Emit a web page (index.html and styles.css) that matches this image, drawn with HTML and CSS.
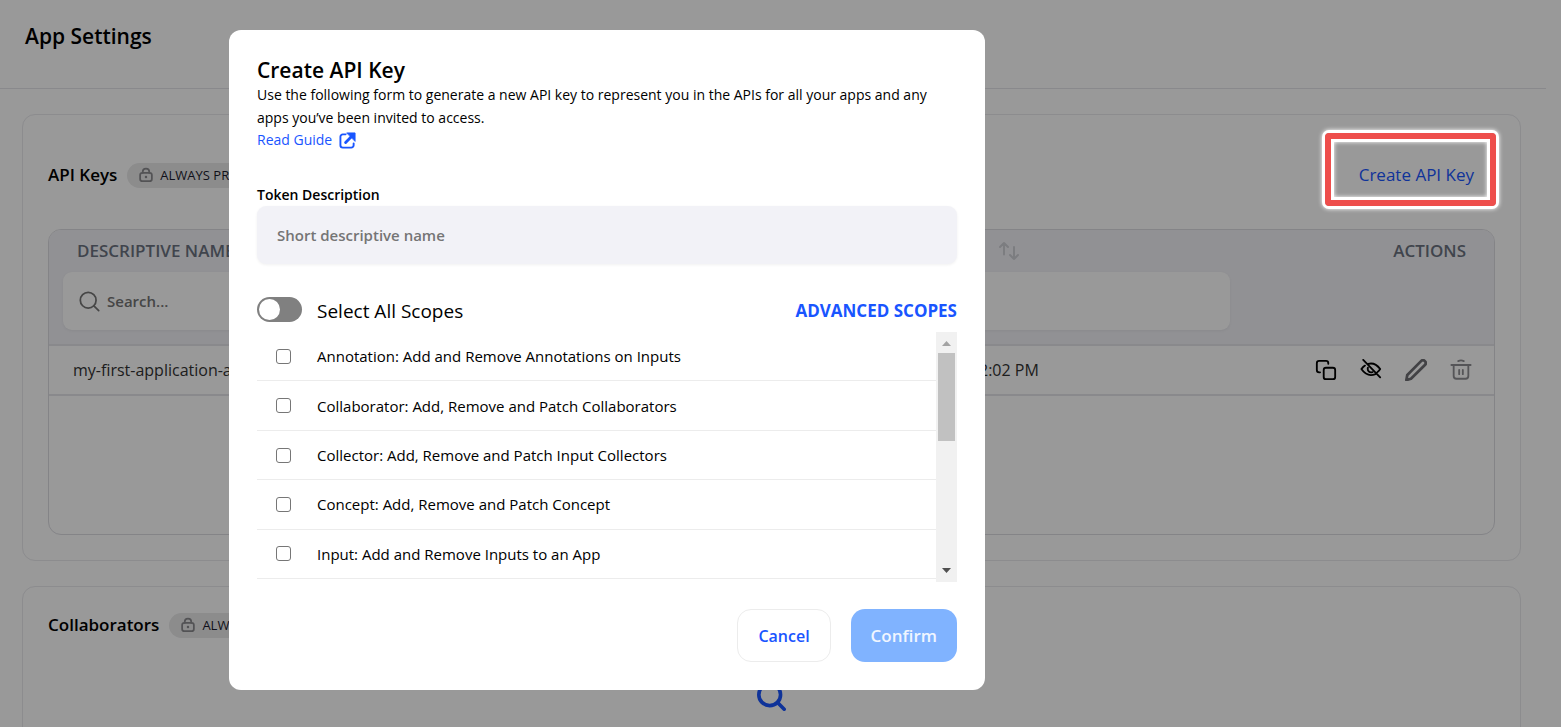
FILE: index.html
```html
<!DOCTYPE html>
<html lang="en">
<head>
<meta charset="utf-8">
<meta name="viewport" content="width=device-width, initial-scale=1">
<title>App Settings</title>
<link rel="stylesheet" href="styles.css">
</head>
<body>
<svg class="defs" aria-hidden="true">
  <symbol id="lock" viewBox="0 0 16 16"><rect x="1.3" y="5.5" width="13.4" height="9.6" rx="2.6"/><path d="M4.3 5.5V4.4a3.7 3.7 0 0 1 7.4 0v1.1"/><circle class="dot" cx="8" cy="10.3" r="1.4"/></symbol>
  <symbol id="search" viewBox="0 0 24 24"><circle cx="10.5" cy="10.5" r="9"/><path d="M17 17l5.5 5.5"/></symbol>
</svg>

<div class="page">
  <header class="page-header"><h1>App Settings</h1></header>
  <main class="sections">
    <section class="card">
      <div class="card-head with-action">
        <h2>API Keys</h2>
        <span class="pill"><svg class="pill-icon"><use href="#lock"/></svg>ALWAYS PRIVATE</span>
        <div class="callout-anchor">
          <button type="button" class="create">Create API Key</button>
          <span class="callout"></span>
        </div>
      </div>
      <div class="table-frame">
        <table class="keys">
          <colgroup><col class="col-name"><col class="col-date"><col class="col-actions"></colgroup>
          <thead>
            <tr class="labels">
              <th scope="col">DESCRIPTIVE NAME</th>
              <th scope="col" aria-label="Created">
                <svg class="sort" viewBox="0 0 20 20"><path d="M5 13.5V2M1 6l4-4 4 4M15 6v12M11 14l4 4 4-4"/></svg>
              </th>
              <th scope="col" class="right">ACTIONS</th>
            </tr>
            <tr class="filters">
              <td><label class="search"><svg class="search-icon"><use href="#search"/></svg><input type="text" placeholder="Search..." aria-label="Search names"></label></td>
              <td><label class="search"><input type="text" aria-label="Search dates"></label></td>
              <td></td>
            </tr>
          </thead>
          <tbody>
            <tr>
              <td>my-first-application-all</td>
              <td>2:02 PM</td>
              <td class="action-cell">
                <div class="actions">
                  <button type="button" aria-label="Copy"><svg viewBox="0 0 24 24"><rect x="9.5" y="9.5" width="12.500" height="12.500" rx="2.5"/><path d="M5.500 14.500H4.500A2.500 2.500 0 0 1 2 12V4.500A2.500 2.500 0 0 1 4.500 2H12a2.500 2.500 0 0 1 2.500 2.500v.8"/></svg></button>
                  <button type="button" aria-label="Show"><svg viewBox="0 0 24 24"><path d="M3.500 1l18.500 19M9 5.300c4.800-1.300 9.600 1 13 5.700-.8 1.300-1.800 2.300-3 3.300M5.400 7.200C4 8.200 2.700 9.500 1.500 11c4 5.700 9.500 8 15.300 5.500M8.600 9.500c-.9 3.500 2 6 5 4.800"/></svg></button>
                  <button type="button" class="muted" aria-label="Edit"><svg viewBox="0 0 24 24"><path d="M1.500 23l1-5.500L17.500 2.300a2.900 2.900 0 0 1 4.200 4.200L6.500 21.500z"/></svg></button>
                  <button type="button" class="faint" aria-label="Delete"><svg viewBox="0 0 24 24"><path d="M1.500 6.500h21M9 2.300c1.800-.9 4.200-.9 6 0M4 6.500v12a3 3 0 0 0 3 3h10a3 3 0 0 0 3-3v-12M10 12v4.500M14 12v4.500"/></svg></button>
                </div>
              </td>
            </tr>
          </tbody>
        </table>
      </div>
    </section>
    <section class="card">
      <div class="card-head">
        <h2>Collaborators</h2>
        <span class="pill"><svg class="pill-icon"><use href="#lock"/></svg>ALWAYS PRIVATE</span>
      </div>
      <div class="empty"><svg><use href="#search"/></svg></div>
    </section>
  </main>
</div>

<div class="overlay">
  <form class="modal" role="dialog" aria-labelledby="modal-title">
    <h2 id="modal-title">Create API Key</h2>
    <p>Use the following form to generate a new API key to represent you in the APIs for all your apps and any apps you’ve been invited to access.</p>
    <a class="guide" href="#">Read Guide
      <svg viewBox="0 0 18 18"><path d="M7 2.500H4A2.500 2.500 0 0 0 1.500 5v9A2.500 2.500 0 0 0 4 16.500h9a2.500 2.500 0 0 0 2.500-2.500v-2"/><path class="shaft" d="M7 11L13 5"/><path class="head" d="M8.500 1h8.500v8.500z"/></svg>
    </a>
    <label class="field-label" for="token">Token Description</label>
    <input class="field" id="token" type="text" placeholder="Short descriptive name">
    <div class="select-all">
      <input class="toggle" id="all" type="checkbox" role="switch">
      <label for="all">Select All Scopes</label>
      <button type="button" class="advanced">ADVANCED SCOPES</button>
    </div>
    <div class="scopes">
      <ul>
        <li><label><input type="checkbox">Annotation: Add and Remove Annotations on Inputs</label></li>
        <li><label><input type="checkbox">Collaborator: Add, Remove and Patch Collaborators</label></li>
        <li><label><input type="checkbox">Collector: Add, Remove and Patch Input Collectors</label></li>
        <li><label><input type="checkbox">Concept: Add, Remove and Patch Concept</label></li>
        <li><label><input type="checkbox">Input: Add and Remove Inputs to an App</label></li>
      </ul>
      <div class="scrollbar" aria-hidden="true">
        <svg class="arrow up" viewBox="0 0 9 5"><path d="M0 5l4.500-5L9 5z"/></svg>
        <div class="thumb"></div>
        <svg class="arrow down" viewBox="0 0 9 5"><path d="M0 0l4.500 5L9 0z"/></svg>
      </div>
    </div>
    <div class="buttons">
      <button type="button" class="btn cancel">Cancel</button>
      <button type="submit" class="btn confirm" disabled>Confirm</button>
    </div>
  </form>
</div>
</body>
</html>
```

FILE: styles.css
```css
* { box-sizing: border-box; }

body {
  margin: 0;
  background: #fff;
  color: #000;
  font: 15px/24px "Open Sans", "Noto Sans", sans-serif;
}

h1, h2, p, ul { margin: 0; padding: 0; }
h1, h2 { font-weight: 600; }
ul { list-style: none; }
svg { display: block; flex: none; fill: none; stroke: currentColor; stroke-linecap: round; stroke-linejoin: round; }
button, input { font: inherit; color: inherit; margin: 0; }
button { border: 0; padding: 0; background: none; cursor: pointer; }
.defs { position: absolute; width: 0; height: 0; }

/* page behind the dialog */
.page { height: 100vh; overflow: hidden; }
.page-header {
  margin-right: 15px;
  padding: 20px 25px 36px;
  border-bottom: 1px solid #e5e5ea;
}
.page-header h1 { font-size: 21px; line-height: 32px; }

.sections { display: flex; flex-direction: column; gap: 25px; padding: 25px 40px 0 22px; }
.card { border: 1px solid #e9e9ed; border-radius: 13px; padding: 25px; }
.card-head { display: flex; align-items: center; gap: 10px; height: 26px; }
.with-action { height: 70px; }
.card-head h2 { font-size: 17px; }
.pill {
  display: flex;
  align-items: center;
  gap: 7px;
  height: 25px;
  padding: 0 12px;
  border-radius: 13px;
  background: #e9e9ea;
  color: #1c1c2e;
  font-size: 13px;
}
.pill-icon { width: 14px; height: 16px; color: #8a8a8e; stroke-width: 2; }
.dot { fill: currentColor; stroke: none; }

.callout-anchor { position: relative; margin-left: auto; padding-right: 21px; }
.create { color: #1955ff; font-size: 17px; }
.callout {
  position: absolute;
  z-index: 20;
  inset: -30px -1px -19px -34px;
  border: 6px solid #ee4e4c;
  border-radius: 4px;
  box-shadow: 0 0 0 3px #fff, 0 0 4px 3px #fff, inset 0 0 0 3px #fff, inset 0 0 4px 3px #fff;
  pointer-events: none;
}

.table-frame {
  min-height: 306px;
  margin-top: 19px;
  border: 1px solid #dcdce2;
  border-radius: 13px;
  overflow: hidden;
}
.keys { width: 100%; table-layout: fixed; border-collapse: collapse; }
.col-name { width: 62.7%; }
.col-date { width: 20%; }
.keys thead { background: #f2f2f7; }
.labels th {
  height: 42px;
  padding: 0 28px;
  text-align: left;
  color: #6b7280;
  font-size: 17px;
  font-weight: 600;
}
.labels .right { text-align: right; }
.sort { width: 20px; height: 20px; margin-left: 16px; color: #cfd0d6; stroke-width: 2; }
.filters td { padding: 0 14px 14px; height: 73px; }
.search {
  display: flex;
  align-items: center;
  gap: 7px;
  height: 58px;
  padding: 0 16px;
  border-radius: 9px;
  background: #fff;
  box-shadow: 0 1px 3px rgba(0, 0, 0, .06);
}
.search-icon { width: 21px; height: 21px; color: #757575; stroke-width: 2; }
.search input { width: 100%; border: 0; padding: 0; outline: 0; background: none; font-weight: 600; }
.search ::placeholder, .field::placeholder { color: #757575; opacity: 1; }
.keys tbody tr { border-top: 2px solid #e5e5ea; border-bottom: 2px solid #e5e5ea; }
.keys tbody td { height: 50px; padding: 0 24px; font-size: 16px; color: #333; white-space: nowrap; }
.keys .action-cell { padding-right: 21px; }
.actions { display: flex; justify-content: flex-end; gap: 21px; }
.actions button { color: #000; }
.actions svg { width: 24px; height: 24px; padding: 1px; stroke-width: 2; }
.actions .muted { color: #6e6e73; }
.actions .muted svg { stroke-width: 3; }
.actions .faint { color: #8e8e93; }

.empty { display: flex; justify-content: center; padding: 44px 0; color: #1955ff; }
.empty svg { width: 29px; height: 29px; stroke-width: 3; }

/* dialog */
.overlay {
  position: fixed;
  inset: 0;
  z-index: 10;
  display: flex;
  justify-content: center;
  align-items: flex-start;
  padding: 30px 347px 0 0;
  background: rgba(0, 0, 0, .4);
}
.modal { width: 756px; max-width: 100%; padding: 28px; border-radius: 12px; background: #fff; }
.modal h2 { font-size: 21px; line-height: 25px; }
.modal p { font-size: 14px; line-height: 23px; }
.guide { display: flex; align-items: center; gap: 7px; color: #1955ff; font-size: 14px; line-height: 22px; text-decoration: none; }
.guide svg { width: 17px; height: 17px; stroke-width: 2; }
.guide .shaft { stroke-width: 3; }
.guide .head { fill: currentColor; stroke-width: 1; }
.field-label { display: block; margin-top: 32px; font-size: 14px; font-weight: 600; line-height: 23px; }
.field {
  display: block;
  width: 100%;
  height: 58px;
  padding: 0 20px;
  border: 0;
  border-radius: 9px;
  background: #f2f2f7;
  box-shadow: 0 1px 3px rgba(0, 0, 0, .06);
  font-weight: 600;
}
.select-all { display: flex; align-items: center; gap: 15px; height: 42px; margin-top: 26px; font-size: 19px; }
.toggle {
  appearance: none;
  display: flex;
  width: 45px;
  height: 25px;
  margin-bottom: 4px;
  padding: 2px;
  border-radius: 13px;
  background: #808080;
}
.toggle::before { content: ""; width: 21px; height: 21px; border-radius: 50%; background: #fff; }
.advanced { margin-left: auto; color: #1955ff; font-size: 17px; font-weight: 700; }

.scopes { display: flex; height: 250px; }
.scopes ul { flex: 1; display: flex; flex-direction: column; height: 247px; }
.scopes li { flex: 1; border-bottom: 1px solid #ececec; }
.scopes label { display: flex; align-items: center; gap: 26px; height: 100%; padding-left: 19px; }
.scopes input {
  appearance: none;
  width: 15px;
  height: 15px;
  border: 1px solid #767676;
  border-radius: 3px;
  background: #fff;
}
.scrollbar { display: flex; flex-direction: column; align-items: center; width: 21px; padding: 9px 0; background: #f1f1f1; }
.thumb { width: 17px; height: 88px; margin-top: 7px; background: #c1c1c1; }
.arrow { width: 9px; height: 5px; stroke: none; fill: #a3a3a3; }
.arrow.down { margin-top: auto; fill: #505050; }

.buttons { display: flex; justify-content: flex-end; gap: 20px; margin-top: 27px; }
.btn { height: 53px; padding: 0 20px; border-radius: 14px; font-size: 16px; font-weight: 600; }
.cancel { border: 1px solid #ececec; color: #1955ff; }
.confirm { background: #80b3ff; color: #f0f6ff; font-size: 17px; }
```
